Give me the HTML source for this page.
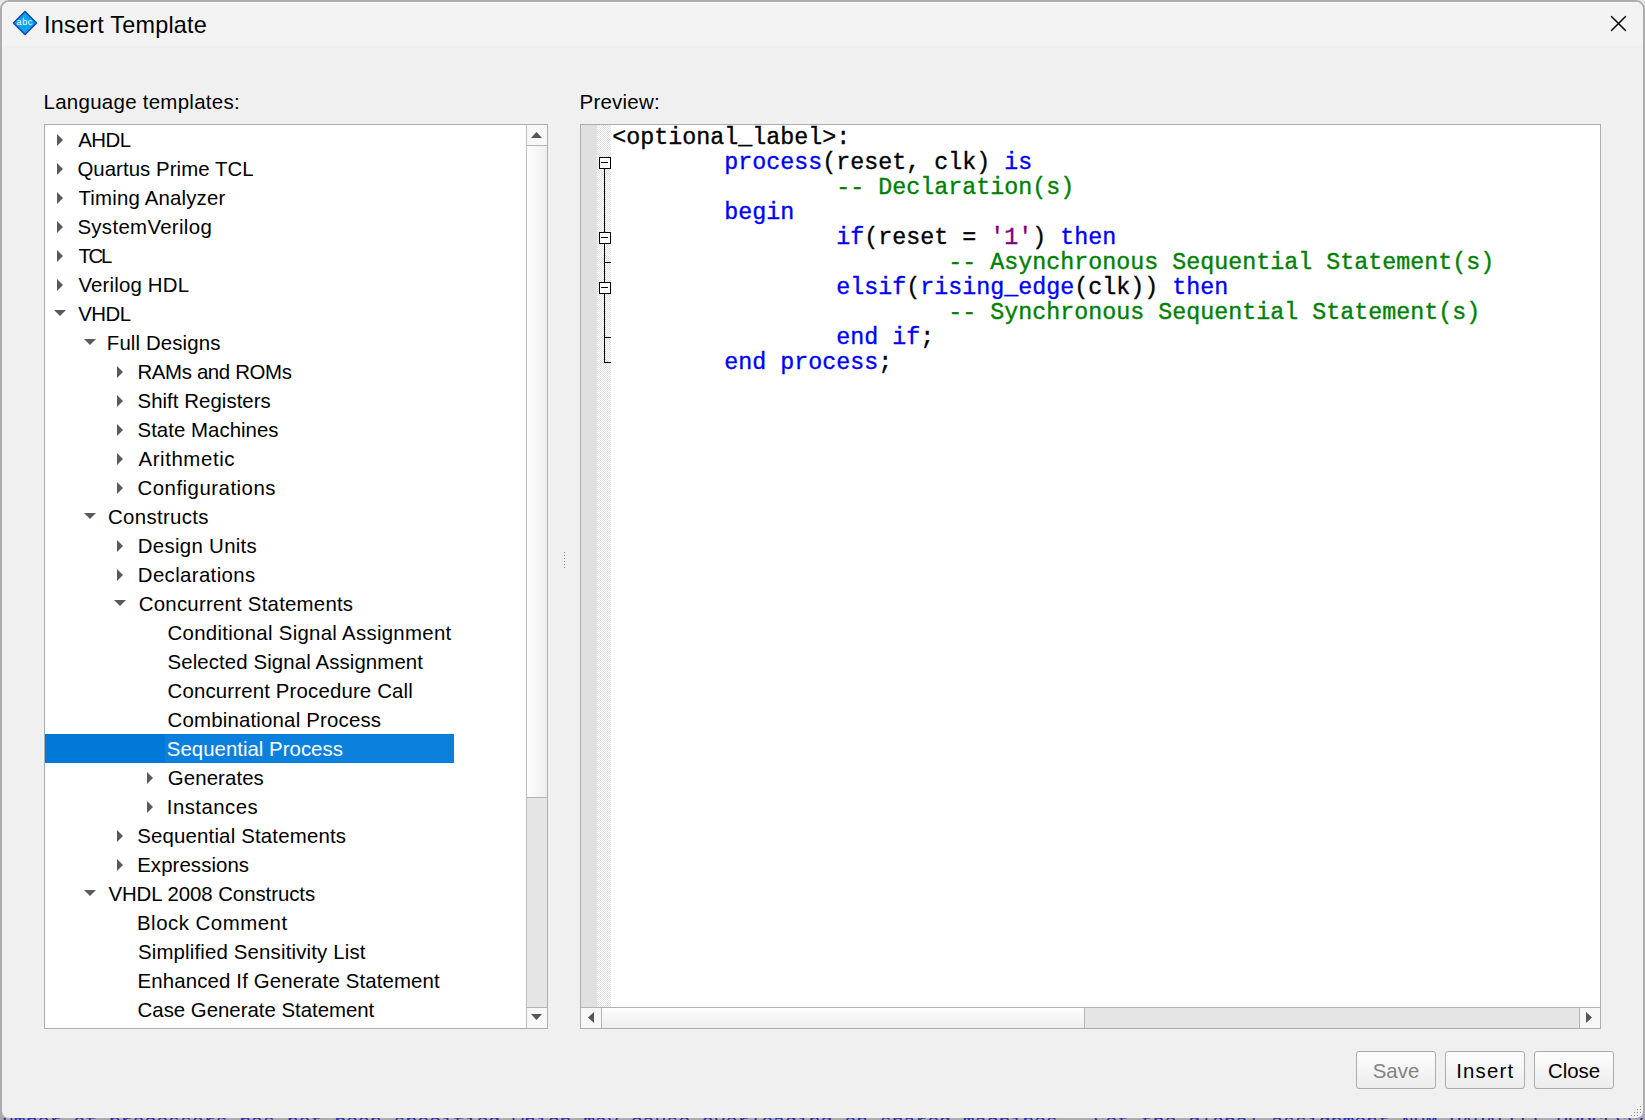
<!DOCTYPE html>
<html><head><meta charset="utf-8">
<style>
*{margin:0;padding:0;box-sizing:border-box}
html,body{width:1645px;height:1120px;overflow:hidden;background:#a8a8a8;font-family:"Liberation Sans",sans-serif;color:#000;position:relative}
div,svg{position:absolute}
#bgtext{left:0;top:1118px;width:1645px;height:2px;overflow:hidden;font-family:"Liberation Mono",monospace;font-size:20px;line-height:20px;color:#2a2ab0;white-space:pre}
#bgtext span{position:absolute;left:2px;top:-5px;letter-spacing:-0.14px}
#win{left:0;top:0;width:1645px;height:1120px;border:2px solid #adadad;border-radius:9px;background:#f0f0f0;overflow:hidden}
#title{left:0;top:0;width:1641px;height:44px;background:#f3f3f3;border-top:1px solid #f8f8f8}
.lbl{font-size:20.5px;line-height:24px;white-space:pre}
.tt{font-size:20.4px;line-height:29px;height:29px;white-space:pre}
.code{font-family:"Liberation Mono",monospace;font-size:23.33px;line-height:25px;height:25px;white-space:pre;-webkit-text-stroke:0.35px currentColor}
.k{color:#0000ff}.c{color:#008000}.n{color:#800080}
.btn{top:1051px;width:80px;height:38px;border:1px solid #adadad;border-radius:3px;background:linear-gradient(#fdfdfd,#ececec)}
.bt{top:1057px;font-size:20.4px;line-height:29px;white-space:pre;transform:translateX(-50%)}
</style></head><body>
<div style="left:0;top:0;width:1645px;height:30px;background:#e6e6e6"></div>
<div id="win"><div id="title"></div></div>
<div id="bgtext"><span>umber of processors has not been specified which may cause overloading on shared machines.  Set the global assignment NUM_PARALLEL_PROCESSORS in your QSF to an appropriate value for best performance.</span></div>

<svg style="left:11px;top:9px" width="28" height="28" viewBox="0 0 28 28">
 <path d="M14 2.5 L25.5 14 L14 25.5 L2.5 14 Z" fill="#0ea2ef" stroke="#0a4aa8" stroke-width="1.6" stroke-linejoin="round"/>
 <text x="5.6" y="15.8" font-family="Liberation Sans" font-size="9.2" letter-spacing="0.5" fill="#fff">abc</text>
</svg>
<div class="lbl" style="left:44px;top:11px;font-size:23.4px;line-height:28px;letter-spacing:0.24px">Insert Template</div>
<svg style="left:1609px;top:14px" width="19" height="19" viewBox="0 0 19 19">
 <path d="M2.5 2.5 L16.5 16.5 M16.5 2.5 L2.5 16.5" stroke="#000" stroke-width="1.5" stroke-linecap="round"/>
</svg>

<div class="lbl" style="left:43.5px;top:90px;letter-spacing:0.26px">Language templates:</div>
<div class="lbl" style="left:579.5px;top:90px;letter-spacing:0.23px">Preview:</div>

<!-- tree -->
<div style="left:44px;top:124px;width:504px;height:905px;border:1px solid #adadad;background:#fff"></div>
<div style="left:45px;top:734px;width:409px;height:29px;background:#0078d7"></div>
<div style="left:165px;top:735px;width:289px;height:27px;background:#0c80dd"></div>
<div class="tt" style="left:78.20px;top:126px;letter-spacing:-0.467px">AHDL</div>
<div class="tt" style="left:77.40px;top:155px;letter-spacing:0.062px">Quartus Prime TCL</div>
<div class="tt" style="left:78.40px;top:184px;letter-spacing:0.186px">Timing Analyzer</div>
<div class="tt" style="left:77.40px;top:213px;letter-spacing:0.334px">SystemVerilog</div>
<div class="tt" style="left:78.40px;top:242px;letter-spacing:-2.300px">TCL</div>
<div class="tt" style="left:78.40px;top:271px;letter-spacing:0.180px">Verilog HDL</div>
<div class="tt" style="left:78.20px;top:300px;letter-spacing:-0.533px">VHDL</div>
<div class="tt" style="left:106.80px;top:329px;letter-spacing:0.127px">Full Designs</div>
<div class="tt" style="left:137.50px;top:358px;letter-spacing:-0.358px">RAMs and ROMs</div>
<div class="tt" style="left:137.50px;top:387px;letter-spacing:0.050px">Shift Registers</div>
<div class="tt" style="left:137.50px;top:416px;letter-spacing:0.038px">State Machines</div>
<div class="tt" style="left:138.50px;top:445px;letter-spacing:0.589px">Arithmetic</div>
<div class="tt" style="left:137.50px;top:474px;letter-spacing:0.500px">Configurations</div>
<div class="tt" style="left:108.00px;top:503px;letter-spacing:0.333px">Constructs</div>
<div class="tt" style="left:137.80px;top:532px;letter-spacing:0.309px">Design Units</div>
<div class="tt" style="left:137.80px;top:561px;letter-spacing:0.363px">Declarations</div>
<div class="tt" style="left:138.80px;top:590px;letter-spacing:0.230px">Concurrent Statements</div>
<div class="tt" style="left:167.50px;top:619px;letter-spacing:0.296px">Conditional Signal Assignment</div>
<div class="tt" style="left:167.50px;top:648px;letter-spacing:0.108px">Selected Signal Assignment</div>
<div class="tt" style="left:167.50px;top:677px;letter-spacing:0.163px">Concurrent Procedure Call</div>
<div class="tt" style="left:167.50px;top:706px;letter-spacing:0.194px">Combinational Process</div>
<div class="tt" style="left:166.80px;top:735px;letter-spacing:0.024px;color:#fff">Sequential Process</div>
<div class="tt" style="left:167.80px;top:764px;letter-spacing:0.101px">Generates</div>
<div class="tt" style="left:166.80px;top:793px;letter-spacing:0.450px">Instances</div>
<div class="tt" style="left:137.20px;top:822px;letter-spacing:0.180px">Sequential Statements</div>
<div class="tt" style="left:137.20px;top:851px;letter-spacing:0.080px">Expressions</div>
<div class="tt" style="left:108.40px;top:880px;letter-spacing:-0.053px">VHDL 2008 Constructs</div>
<div class="tt" style="left:137.00px;top:909px;letter-spacing:0.516px">Block Comment</div>
<div class="tt" style="left:138.00px;top:938px;letter-spacing:0.162px">Simplified Sensitivity List</div>
<div class="tt" style="left:137.60px;top:967px;letter-spacing:0.138px">Enhanced If Generate Statement</div>
<div class="tt" style="left:137.60px;top:996px;letter-spacing:-0.009px">Case Generate Statement</div>
<svg style="left:0;top:0" width="1645" height="1120"><g fill="#5a5a5a"><path d="M57 134 L63 140 L57 146 Z"/><path d="M57 163 L63 169 L57 175 Z"/><path d="M57 192 L63 198 L57 204 Z"/><path d="M57 221 L63 227 L57 233 Z"/><path d="M57 250 L63 256 L57 262 Z"/><path d="M57 279 L63 285 L57 291 Z"/><path d="M54 310 L66 310 L60 316 Z"/><path d="M84 339 L96 339 L90 345 Z"/><path d="M117 366 L123 372 L117 378 Z"/><path d="M117 395 L123 401 L117 407 Z"/><path d="M117 424 L123 430 L117 436 Z"/><path d="M117 453 L123 459 L117 465 Z"/><path d="M117 482 L123 488 L117 494 Z"/><path d="M84 513 L96 513 L90 519 Z"/><path d="M117 540 L123 546 L117 552 Z"/><path d="M117 569 L123 575 L117 581 Z"/><path d="M114 600 L126 600 L120 606 Z"/><path d="M147 772 L153 778 L147 784 Z"/><path d="M147 801 L153 807 L147 813 Z"/><path d="M117 830 L123 836 L117 842 Z"/><path d="M117 859 L123 865 L117 871 Z"/><path d="M84 890 L96 890 L90 896 Z"/></g></svg>

<!-- vscroll -->
<div style="left:526px;top:125px;width:1px;height:903px;background:#bdbdbd"></div>
<div style="left:527px;top:125px;width:20px;height:20px;background:#f7f7f7"></div>
<div style="left:527px;top:145px;width:20px;height:1px;background:#b4b4b4"></div>
<div style="left:527px;top:146px;width:20px;height:651px;background:linear-gradient(to right,#fefefe,#eeeeee)"></div>
<div style="left:527px;top:797px;width:20px;height:1px;background:#b4b4b4"></div>
<div style="left:527px;top:798px;width:20px;height:209px;background:#e5e5e5"></div>
<div style="left:527px;top:1007px;width:20px;height:1px;background:#b4b4b4"></div>
<div style="left:527px;top:1008px;width:20px;height:20px;background:#f7f7f7"></div>

<!-- preview -->
<div style="left:580px;top:124px;width:1021px;height:905px;border:1px solid #adadad;background:#fff"></div>
<div style="left:581px;top:125px;width:16px;height:882px;background:#e0e0e0"></div>
<svg style="left:597px;top:125px" width="14" height="882"><defs><pattern id="chk" width="2" height="2" patternUnits="userSpaceOnUse"><rect width="2" height="2" fill="#fff"/><rect width="1" height="1" fill="#e0e0e0"/><rect x="1" y="1" width="1" height="1" fill="#e0e0e0"/></pattern></defs><rect width="14" height="882" fill="url(#chk)" shape-rendering="crispEdges"/></svg>
<svg style="left:0;top:0" width="1645" height="1120" shape-rendering="crispEdges"><rect x="599.5" y="157.5" width="11" height="11" fill="#fff" stroke="#000" stroke-width="1"/><path d="M601 162.5 H608" stroke="#000" stroke-width="1"/><rect x="599.5" y="232.5" width="11" height="11" fill="#fff" stroke="#000" stroke-width="1"/><path d="M601 237.5 H608" stroke="#000" stroke-width="1"/><rect x="599.5" y="282.5" width="11" height="11" fill="#fff" stroke="#000" stroke-width="1"/><path d="M601 287.5 H608" stroke="#000" stroke-width="1"/><path d="M604.5 169 V232" stroke="#000" stroke-width="1"/><path d="M604.5 244 V282" stroke="#000" stroke-width="1"/><path d="M604.5 294 V363" stroke="#000" stroke-width="1"/><path d="M604 262.5 H611" stroke="#000" stroke-width="1"/><path d="M604 337.5 H611" stroke="#000" stroke-width="1"/><path d="M604 362.5 H611" stroke="#000" stroke-width="1"/></svg>
<div class="code" style="left:612.3px;top:126.0px">&lt;optional_label&gt;:</div>
<div class="code" style="left:612.3px;top:151.0px">        <span class="k">process</span>(reset, clk) <span class="k">is</span></div>
<div class="code" style="left:612.3px;top:176.0px">                <span class="c">-- Declaration(s)</span></div>
<div class="code" style="left:612.3px;top:201.0px">        <span class="k">begin</span></div>
<div class="code" style="left:612.3px;top:226.0px">                <span class="k">if</span>(reset = <span class="n">&#x27;1&#x27;</span>) <span class="k">then</span></div>
<div class="code" style="left:612.3px;top:251.0px">                        <span class="c">-- Asynchronous Sequential Statement(s)</span></div>
<div class="code" style="left:612.3px;top:276.0px">                <span class="k">elsif</span>(<span class="k">rising_edge</span>(clk)) <span class="k">then</span></div>
<div class="code" style="left:612.3px;top:301.0px">                        <span class="c">-- Synchronous Sequential Statement(s)</span></div>
<div class="code" style="left:612.3px;top:326.0px">                <span class="k">end if</span>;</div>
<div class="code" style="left:612.3px;top:351.0px">        <span class="k">end process</span>;</div>

<!-- hscroll -->
<div style="left:581px;top:1007px;width:1019px;height:1px;background:#b4b4b4"></div>
<div style="left:581px;top:1008px;width:20px;height:20px;background:#f7f7f7"></div>
<div style="left:601px;top:1008px;width:1px;height:20px;background:#b4b4b4"></div>
<div style="left:602px;top:1008px;width:482px;height:20px;background:linear-gradient(#fefefe,#eeeeee)"></div>
<div style="left:1084px;top:1008px;width:1px;height:20px;background:#b4b4b4"></div>
<div style="left:1085px;top:1008px;width:494px;height:20px;background:#e5e5e5"></div>
<div style="left:1579px;top:1008px;width:1px;height:20px;background:#b4b4b4"></div>
<div style="left:1580px;top:1008px;width:20px;height:20px;background:#f7f7f7"></div>

<svg style="left:0;top:0" width="1645" height="1120"><g fill="#555">
 <path d="M531 138 L536.5 132 L542 138 Z"/>
 <path d="M531 1014 L542 1014 L536.5 1020 Z"/>
 <path d="M594 1012 L594 1023 L588 1017.5 Z"/>
 <path d="M1586 1012 L1592 1017.5 L1586 1023 Z"/>
</g></svg>

<svg style="left:0;top:0" width="1645" height="1120" shape-rendering="crispEdges"><g fill="#8c8c8c">
 <rect x="564" y="552" width="1" height="1"/><rect x="564" y="555" width="1" height="1"/><rect x="564" y="558" width="1" height="1"/>
 <rect x="564" y="561" width="1" height="1"/><rect x="564" y="564" width="1" height="1"/><rect x="564" y="567" width="1" height="1"/>
 <rect x="1640" y="1106" width="1" height="1"/><rect x="1637" y="1109" width="1" height="1"/><rect x="1640" y="1109" width="1" height="1"/>
 <rect x="1634" y="1112" width="1" height="1"/><rect x="1637" y="1112" width="1" height="1"/><rect x="1640" y="1112" width="1" height="1"/>
 <rect x="1631" y="1115" width="1" height="1"/><rect x="1634" y="1115" width="1" height="1"/><rect x="1637" y="1115" width="1" height="1"/>
</g></svg>
<div class="btn" style="left:1356px"></div><div class="bt" style="left:1396.00px;letter-spacing:0.000px;color:#838383">Save</div>
<div class="btn" style="left:1445px"></div><div class="bt" style="left:1485.30px;letter-spacing:1.200px;color:#000">Insert</div>
<div class="btn" style="left:1534px"></div><div class="bt" style="left:1574.00px;letter-spacing:0.000px;color:#000">Close</div>
</body></html>
